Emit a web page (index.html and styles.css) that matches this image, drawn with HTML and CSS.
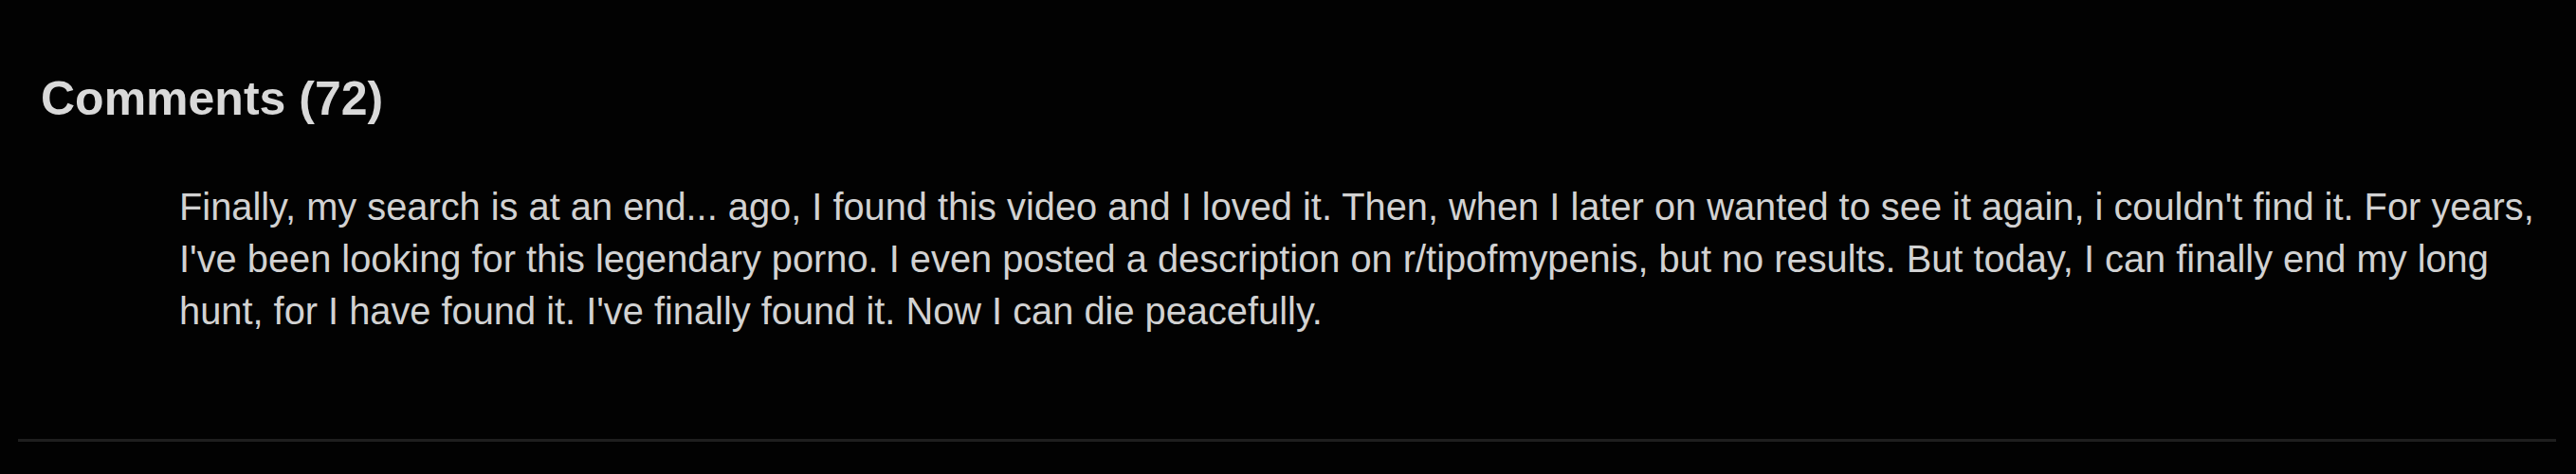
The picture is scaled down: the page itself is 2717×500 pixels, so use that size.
FILE: index.html
```html
<!DOCTYPE html>
<html lang="en">
<head>
<meta charset="utf-8">
<title>Comments</title>
<link rel="stylesheet" href="styles.css">
</head>
<body>
<section class="comments">
  <h2 class="comments-title">Comments (72)</h2>
  <div class="comment">
    <p class="comment-text">Finally, my search is at an end... ago, I found this video and I loved it. Then, when I later on wanted to see it again, i couldn't find it. For years, I've been looking for this legendary porno. I even posted a description on r/tipofmypenis, but no results. But today, I can finally end my long hunt, for I have found it. I've finally found it. Now I can die peacefully.</p>
  </div>
</section>
</body>
</html>
```

FILE: styles.css
```css
html, body {
  margin: 0;
  padding: 0;
  background: #020202;
}
body {
  font-family: "Liberation Sans", Arial, Helvetica, sans-serif;
  color: #d4d4d4;
}
.comments {
  margin: 0 21px 0 19px;
  padding-top: 76px;
  height: 387px;
  box-sizing: content-box;
  border-bottom: 3px solid #1e1e1e;
}
.comments-title {
  margin: 0;
  padding-left: 24px;
  font-size: 50px;
  line-height: 56px;
  font-weight: bold;
  color: #d9d9d9;
}
.comment {
  margin-top: 59px;
  padding-left: 170px;
  padding-right: 0;
}
.comment-text {
  margin: 0;
  font-size: 39.8px;
  line-height: 55px;
  color: #d2d2d2;
}
```
